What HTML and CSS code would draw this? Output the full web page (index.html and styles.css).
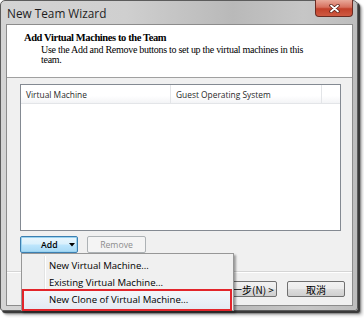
FILE: index.html
```html
<!DOCTYPE html>
<html>
<head>
<meta charset="utf-8">
<link rel="stylesheet" href="styles.css">
</head>
<body>
<div class="window">
  <div class="titlebar">
    <span class="title">New Team Wizard</span>
    <div class="close">
      <svg width="11" height="9" viewBox="0 0 11 9"><path d="M2 1.5 L9 7.5 M9 1.5 L2 7.5" stroke="#5a2018" stroke-width="3.4" stroke-linecap="round"/><path d="M2 1.5 L9 7.5 M9 1.5 L2 7.5" stroke="#fff" stroke-width="1.8" stroke-linecap="round"/></svg>
    </div>
  </div>
  <div class="client">
    <div class="header">
      <div class="h-title">Add Virtual Machines to the Team</div>
      <div class="h-sub">Use the Add and Remove buttons to set up the virtual machines in this<br>team.</div>
    </div>
    <div class="body">
      <div class="listbox">
        <div class="list-head">
          <div class="col col1">Virtual Machine</div>
          <div class="col col2">Guest Operating System</div>
          <div class="col col3"></div>
        </div>
      </div>
      <div class="btnrow">
        <div class="btn btn-add"><span>Add</span><svg width="6" height="4" viewBox="0 0 6 4"><path d="M0 0 H6 L3 3.5 Z" fill="#000"/></svg></div>
        <div class="btn btn-disabled">Remove</div>
      </div>
    </div>
    <div class="footer">
      <div class="btn cjk btn-back"></div>
      <div class="btn cjk">下一步(N) &gt;</div>
      <div class="btn cjk">取消</div>
    </div>
    <div class="menu">
      <div class="gutter"></div>
      <div class="item">New Virtual Machine...</div>
      <div class="item">Existing Virtual Machine...</div>
      <div class="item item-hot">New Clone of Virtual Machine...</div>
    </div>
  </div>
</div>
</body>
</html>
```
FILE: styles.css
```css
html, body {
  margin: 0;
  padding: 0;
  background: #ffffff;
}
body {
  width: 364px;
  height: 318px;
  overflow: hidden;
  font-family: "Open Sans", "Noto Sans", sans-serif;
}
.window {
  box-sizing: border-box;
  width: 358px;
  height: 311px;
  border: 1px solid #5c5c5c;
  border-radius: 5px 5px 3px 3px;
  background: linear-gradient(to right, #d4d4d4 0%, #cfcfcf 35%, #b9b9b9 65%, #c6c6c6 85%, #bdbdbd 100%);
  padding: 0 4px 4px 5px;
  display: flex;
  flex-direction: column;
  box-shadow: 2px 2px 0 #3a3a3a, 3px 3px 2px rgba(0,0,0,0.45), 5px 5px 3px rgba(0,0,0,0.15);
}
.titlebar {
  height: 23px;
  display: flex;
  align-items: flex-start;
  padding-left: 1px;
}
.title {
  font-size: 11.8px;
  color: #1e1e1e;
  margin-top: 4px;
}
.close {
  margin-left: auto;
  margin-right: 0;
  margin-top: -1px;
  width: 38px;
  height: 17px;
  box-sizing: border-box;
  border: 1px solid #6b2b22;
  border-top: none;
  border-radius: 0 0 4px 4px;
  background: linear-gradient(to bottom, #e9a99a 0%, #d7705e 45%, #c2402a 55%, #cf5a42 100%);
  display: flex;
  align-items: center;
  justify-content: center;
}
.client {
  flex: 1;
  position: relative;
  border: 1px solid #8c8c8c;
  background: #f0f0f0;
  display: flex;
  flex-direction: column;
}
.header {
  background: #ffffff;
  height: 53px;
  border-bottom: 1px solid #a0a0a0;
  box-sizing: border-box;
  padding: 7px 0 0 17px;
  font-family: "Liberation Serif", serif;
  color: #000;
}
.h-title {
  font-weight: bold;
  font-size: 10.5px;
  letter-spacing: -0.4px;
  line-height: 12px;
}
.h-sub {
  font-size: 10px;
  letter-spacing: -0.28px;
  line-height: 10px;
  padding-left: 17px;
  margin-top: 1px;
}
.body {
  padding: 6px 11px 0 13px;
}
.listbox {
  height: 147px;
  box-sizing: border-box;
  border: 1px solid #848a92;
  background: #ffffff;
}
.list-head {
  display: flex;
  height: 19px;
  box-sizing: border-box;
  background: linear-gradient(to bottom, #ffffff 0%, #ffffff 60%, #f3f4f6 100%);
  border-bottom: 1px solid #e3e5e8;
  font-size: 8.4px;
  color: #2a2a2a;
}
.col {
  box-sizing: border-box;
  padding: 4px 0 0 5px;
  border-right: 1px solid #e3e5e8;
}
.col1 { width: 150px; }
.col2 { width: 151px; }
.col3 { flex: 1; border-right: none; }
.btnrow {
  display: flex;
  gap: 9px;
  margin-top: 5px;
}
.btn {
  box-sizing: border-box;
  height: 17px;
  width: 58px;
  border: 1px solid #707070;
  border-radius: 2px;
  background: linear-gradient(to bottom, #f2f2f2 0%, #ebebeb 48%, #dddddd 52%, #cfcfcf 100%);
  font-size: 8.7px;
  display: flex;
  align-items: center;
  justify-content: center;
  color: #000;
}
.btn-add {
  border-color: #3c7fb1;
  background: linear-gradient(to bottom, #eaf6fd 0%, #d9f0fc 48%, #bee6fd 52%, #a7d9f5 100%);
  box-shadow: inset 0 0 0 1px #9ad3f0;
  justify-content: flex-start;
  padding-left: 20px;
  gap: 11px;
}
.btn-add span { font-weight: 600; }
.btn-disabled {
  width: 59px;
  border-color: #adb2b5;
  background: #f4f4f4;
  color: #8d8d8d;
}
.footer {
  margin-top: auto;
  border-top: 1px solid #d5d5d5;
  box-shadow: inset 0 1px 0 #ffffff;
  display: flex;
  justify-content: flex-end;
  gap: 10px;
  padding: 9px 7px 8px 0;
}
.cjk {
  font-family: "Noto Sans CJK TC", sans-serif;
  font-size: 10px;
  height: 16px;
}
.menu {
  position: absolute;
  left: 14px;
  top: 228px;
  width: 213px;
  height: 58px;
  box-sizing: border-box;
  border: 1px solid #979797;
  background: #f0f0f0;
  box-shadow: 2px 2px 2px rgba(0,0,0,0.35);
  padding: 3px 2px 2px;
  font-size: 9.6px;
  color: #000;
}
.gutter {
  position: absolute;
  left: 22px;
  top: 2px;
  bottom: 2px;
  width: 1px;
  background: #e2e3e3;
  box-shadow: 1px 0 0 #ffffff;
}
.item {
  position: relative;
  height: 17px;
  line-height: 17px;
  padding-left: 25px;
}
.item-hot {
  margin-top: 0;
  height: 18px;
  line-height: 18px;
  background: linear-gradient(to bottom, #f3f6fa 0%, #e3eaf3 100%);
  outline: 2px solid #e2252b;
  outline-offset: 0px;
  margin-right: 1px;
}
```
